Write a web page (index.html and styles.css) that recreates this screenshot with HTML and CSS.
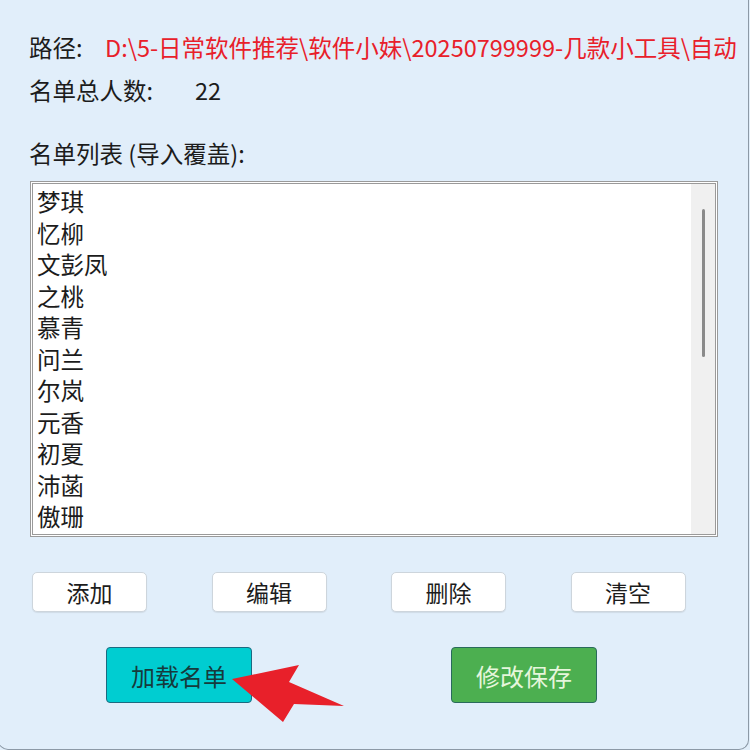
FILE: index.html
```html
<!DOCTYPE html>
<html lang="zh-CN">
<head>
<meta charset="utf-8">
<title>名单管理</title>
<link rel="stylesheet" href="styles.css">
</head>
<body>
<div class="window">
  <div class="row row-path">
    <span class="label label-path">路径:</span>
    <span class="path">D:\5-日常软件推荐\软件小妹\20250799999-几款小工具\自动</span>
  </div>
  <div class="row row-count">
    <span class="label label-count">名单总人数:</span>
    <span class="count">22</span>
  </div>
  <div class="row row-title">名单列表 (导入覆盖):</div>

  <div class="listbox">
    <ul class="items">
      <li>梦琪</li>
      <li>忆柳</li>
      <li>文彭凤</li>
      <li>之桃</li>
      <li>慕青</li>
      <li>问兰</li>
      <li>尔岚</li>
      <li>元香</li>
      <li>初夏</li>
      <li>沛菡</li>
      <li>傲珊</li>
    </ul>
    <div class="scrollbar"><div class="thumb"></div></div>
  </div>

  <div class="actions">
    <button class="btn">添加</button>
    <button class="btn">编辑</button>
    <button class="btn">删除</button>
    <button class="btn">清空</button>
  </div>

  <div class="main-actions">
    <button class="big big-load">加载名单</button>
    <button class="big big-save">修改保存</button>
  </div>

  <svg class="arrow" width="130" height="90" viewBox="0 0 130 90" aria-hidden="true">
    <polygon points="3,37 70,23 60,40 115,64 65,62 54,80" fill="#e8202a"/>
  </svg>
</div>
</body>
</html>
```

FILE: styles.css
```css
html, body {
  margin: 0;
  padding: 0;
  background: #e1eefa;
  overflow: hidden;
}

.window {
  position: relative;
  box-sizing: border-box;
  width: 751px;
  height: 750px;
  margin-left: -2px;
  padding: 31px 0 0 30px;
  background: #e1eefa;
  border: 1px solid #8c99a6;
  border-top: none;
  border-radius: 0 0 10px 10px;
  font-family: "Noto Sans CJK SC", "Noto Sans", sans-serif;
  color: #1c1c1c;
  overflow: hidden;
}

.row {
  display: flex;
  align-items: center;
  height: 32px;
  font-size: 23.5px;
  white-space: nowrap;
}

.row-count {
  margin-top: 11px;
}

.row-title {
  margin-top: 31px;
}

.label {
  flex: none;
}

.label-path {
  width: 76px;
}

.label-count {
  width: 166px;
}

.path {
  color: #e8202a;
}

.listbox {
  box-sizing: border-box;
  display: flex;
  width: 688px;
  height: 356px;
  margin: 12px 0 0 1px;
  border: 3px double #9a9a9a;
  background: #fff;
  overflow: hidden;
}

.items {
  flex: 1;
  list-style: none;
  margin: 0;
  padding: 2px 0 0 4px;
  font-size: 23.5px;
  line-height: 31.5px;
  overflow: hidden;
}

.scrollbar {
  flex: none;
  width: 24px;
  background: #f0f0f0;
  display: flex;
  justify-content: center;
  padding-top: 25px;
  box-sizing: border-box;
}

.thumb {
  width: 3px;
  height: 148px;
  border-radius: 2px;
  background: #8a8a8a;
}

.actions {
  display: flex;
  gap: 64.5px;
  margin: 35px 0 0 3px;
}

.btn {
  box-sizing: border-box;
  width: 115px;
  height: 40px;
  padding: 0;
  border: 1px solid #cdd5dc;
  border-radius: 5px;
  background: #fff;
  font-family: inherit;
  font-size: 23px;
  color: #1c1c1c;
  box-shadow: 0 1px 1px rgba(0, 0, 0, 0.08);
}

.main-actions {
  display: flex;
  gap: 199px;
  margin: 35px 0 0 77px;
}

.big {
  box-sizing: border-box;
  width: 146px;
  height: 56px;
  padding: 0;
  border: 1px solid #1d6a80;
  border-radius: 4px;
  font-family: inherit;
  font-size: 24px;
}

.big-load {
  background: #00cdd1;
  color: #163a3c;
}

.big-save {
  background: #4caf50;
  color: #e6f6dc;
  border-color: #2a6a5c;
}

.arrow {
  position: absolute;
  left: 230px;
  top: 642px;
}
```
